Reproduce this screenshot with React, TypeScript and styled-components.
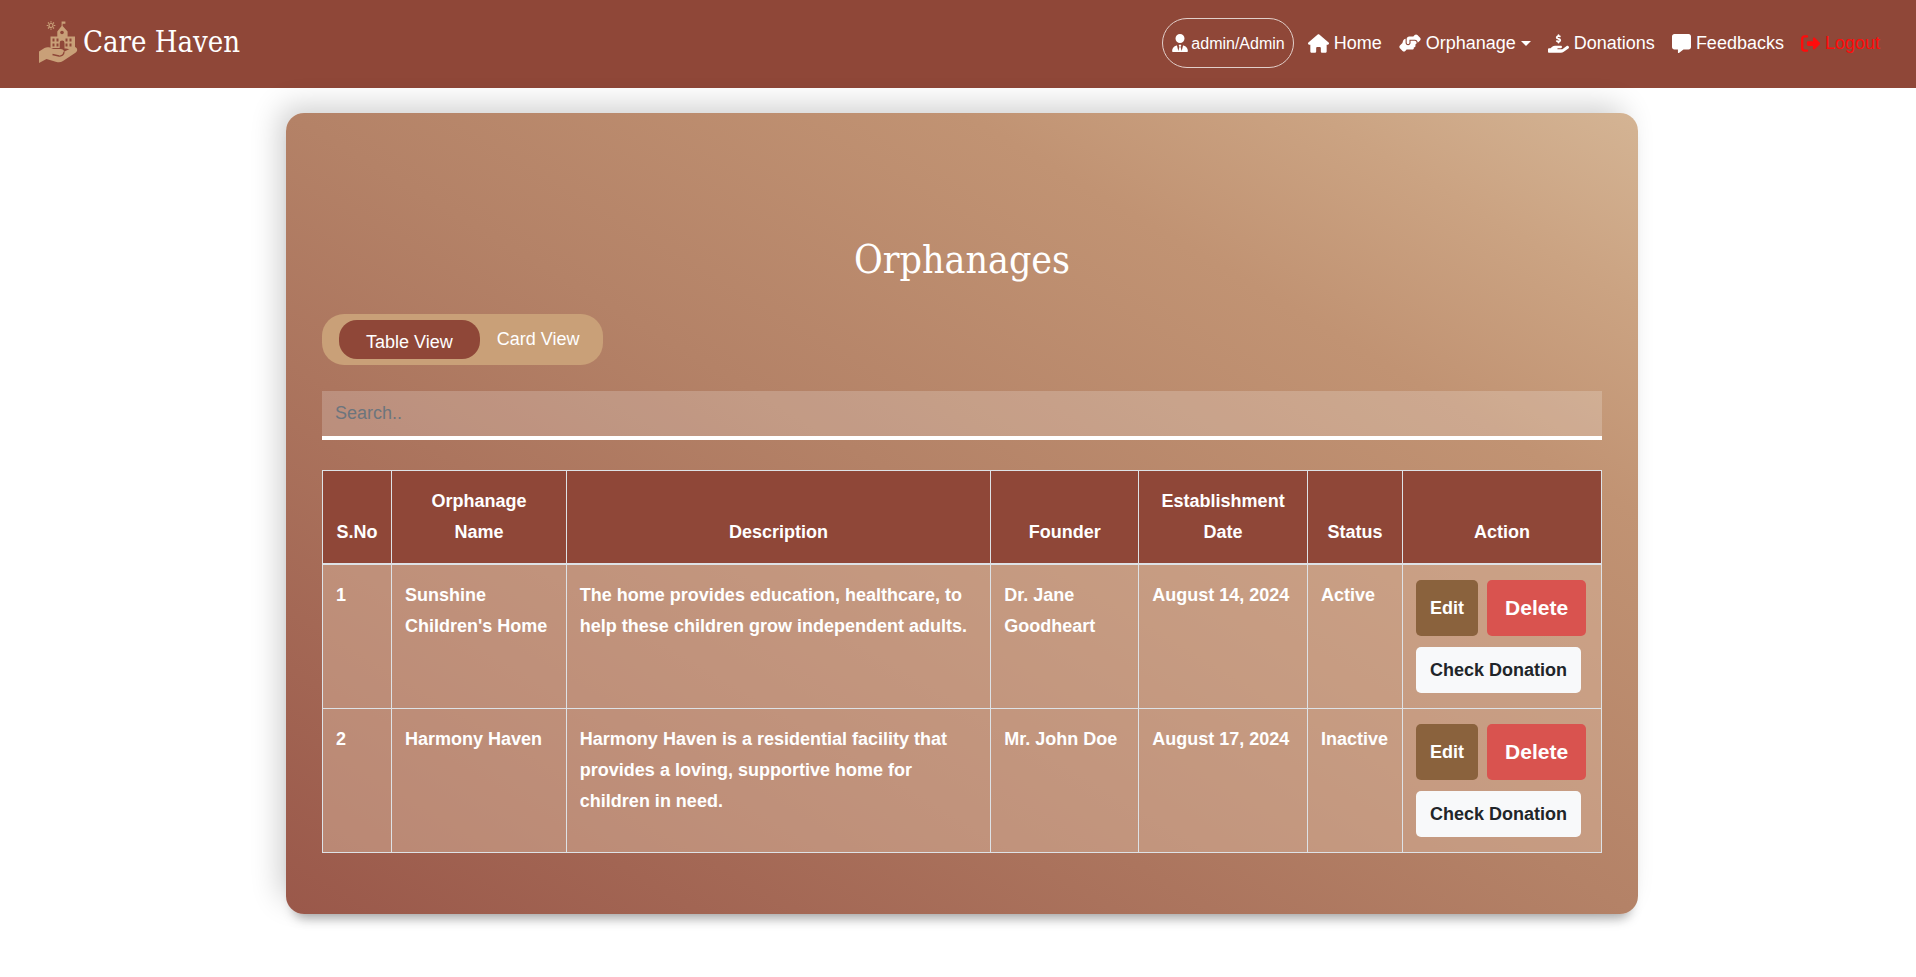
import React, { useState } from "react";
import styled, { createGlobalStyle } from "styled-components";
import {
  FaUserTie,
  FaHouse,
  FaHandshakeAngle,
  FaHandHoldingDollar,
  FaMessage,
  FaRightFromBracket,
} from "react-icons/fa6";

const GlobalStyle = createGlobalStyle`
  *, *::before, *::after { box-sizing: border-box; }
  body {
    margin: 0;
    background: #fff;
    color: #fff;
    font-family: "Liberation Sans", Arial, sans-serif;
    font-size: 18px;
    line-height: 31px;
  }
`;

const serif = `"DejaVu Serif Condensed", "DejaVu Serif", "Liberation Serif", serif`;

const Header = styled.header`
  display: flex;
  align-items: center;
  justify-content: space-between;
  min-height: 88px;
  padding: 0 36px 2px 39px;
  background: #8f4738;
`;

const Brand = styled.a`
  display: flex;
  align-items: center;
  gap: 4px;
  padding-bottom: 2px;
  color: #fff;
  font-family: ${serif};
  font-size: 29px;
  line-height: 42px;
  text-decoration: none;
`;

const Nav = styled.nav`
  display: flex;
  align-items: center;
  gap: 17px;
`;

const NavLink = styled.a<{ $danger?: boolean }>`
  display: flex;
  align-items: center;
  gap: 5px;
  color: ${(p) => (p.$danger ? "#ff0b0b" : "#fff")};
  text-decoration: none;
  white-space: nowrap;
`;

const UserPill = styled.a`
  display: flex;
  align-items: center;
  gap: 2px;
  height: 50px;
  margin-right: -3px;
  padding: 0 8px;
  border: 1px solid #e2cfca;
  border-radius: 25px;
  color: #fff;
  font-size: 16px;
  text-decoration: none;
`;

const Caret = styled.span`
  border: 5px solid transparent;
  border-top: 5px solid #fff;
  border-bottom: 0;
`;

const Main = styled.main`
  padding: 25px 20px 62px 28px;
`;

const Card = styled.section`
  max-width: 1352px;
  margin: 0 auto;
  padding: 118px 36px 61px;
  border-radius: 18px;
  background: linear-gradient(
    to top right,
    #9a584a 0%,
    #b48267 50%,
    #c19373 75%,
    #cba382 88%,
    #d4b494 100%
  );
  box-shadow:
    0 12px 12px -8px rgba(0, 0, 0, 0.35),
    -10px -10px 30px -4px rgba(0, 0, 0, 0.2);
`;

const Title = styled.h1`
  margin: 0 0 26px;
  font-family: ${serif};
  font-size: 39px;
  font-weight: 400;
  line-height: 57px;
  text-align: center;
`;

const Toggle = styled.div`
  display: inline-flex;
  align-items: center;
  gap: 17px;
  height: 51px;
  padding: 0 24px 0 17px;
  border-radius: 22px;
  background: #c9a078;
`;

const ToggleButton = styled.button<{ $active: boolean }>`
  height: 39px;
  padding: ${(p) => (p.$active ? "5px 27px 0" : "0")};
  border: 0;
  border-radius: 18px;
  background: ${(p) => (p.$active ? "#8f4738" : "transparent")};
  color: #fff;
  font: inherit;
  cursor: pointer;
`;

const Search = styled.input`
  display: block;
  width: 100%;
  height: 49px;
  margin: 26px 0 30px;
  padding: 0 13px;
  border: 0;
  border-bottom: 4px solid #fff;
  border-radius: 0;
  background: rgba(255, 255, 255, 0.2);
  color: #fff;
  font: inherit;
  outline: 0;
  &::placeholder { color: #6c757d; opacity: 1; }
`;

const Table = styled.table`
  width: 100%;
  border-collapse: collapse;
  font-weight: 700;
  background: rgba(215, 180, 155, 0.5);
`;

const Th = styled.th<{ $width: string }>`
  width: ${(p) => p.$width};
  padding: 15px 13px;
  border: 1px solid #dee2e6;
  border-bottom-width: 2px;
  background: #8f4738;
  vertical-align: bottom;
`;

const Td = styled.td`
  padding: 15px 13px;
  border: 1px solid #dee2e6;
  vertical-align: top;
`;

const Actions = styled.div`
  display: flex;
  flex-wrap: wrap;
  gap: 11px 9px;
`;

const kinds = {
  edit: "height: 56px; padding: 0 14px; background: #8a623d; color: #fff; font-size: 18px;",
  remove: "height: 56px; padding: 0 18px; background: #d9534f; color: #fff; font-size: 21px;",
  check: "height: 46px; padding: 0 14px; background: #f8f9fa; color: #212529; font-size: 18px;",
};

const ActionButton = styled.button<{ $kind: keyof typeof kinds }>`
  border: 0;
  border-radius: 5px;
  font-family: inherit;
  font-weight: 700;
  cursor: pointer;
  ${(p) => kinds[p.$kind]}
`;

const Logo = () => (
  <svg width="40" height="42" viewBox="0 0 40 42" fill="#c9a078" aria-hidden="true">
    <g stroke="#c9a078" strokeWidth="1.200" fill="none">
      <circle cx="12" cy="4.500" r="2" />
      <path d="M12 .2v1.400M12 7.400v1.400M7.700 4.500h1.400M14.900 4.500h1.400M9 1.500l1 1M14 6.500l1 1M15 1.500l-1 1M10 6.500l-1 1" />
    </g>
    <path d="M22.600 5V.5h3.800v2.300h-2.800V5l5 5.500v5H36v11l-4 2-5-1h-1.500v-5.500a2.400 2.400 0 0 0-4.800 0V27H11.500V15.500h6.800v-5z" />
    <g fill="#8f4738">
      <circle cx="23" cy="11.500" r="1.800" />
      <path d="M13.500 17.500h2v3h-2zm4 0h2v3h-2zM26.500 17.500h2v3h-2zm4 0h2v3h-2zM13.500 22.500h2v3h-2zm4 0h2v3h-2zM26.500 22.500h2v3h-2zm4 0h2v3h-2z" />
    </g>
    <path d="M0 30.500 5.500 27c2-1 4-.8 6-.3l3 1.300h7c2 0 3.500 1 3.500 2.800l8.500-4.300c3-1.300 5.500 1 4.500 3.500-.4.900-1.300 1.500-2.300 2.200L24 40c-2 1.300-4 1.600-6.500 1L7.500 38 0 42z" />
    <path d="M13.500 33.500 20 35c3 .5 5-1.500 5-4.200" fill="none" stroke="#8f4738" strokeWidth="1.300" />
  </svg>
);

const columns = [
  ["S.No", "69px"],
  ["Orphanage Name", "175px"],
  ["Description", "425px"],
  ["Founder", "148px"],
  ["Establishment Date", "169px"],
  ["Status", "95px"],
  ["Action", "199px"],
];

const orphanages = [
  {
    name: "Sunshine Children's Home",
    description: "The home provides education, healthcare, to help these children grow independent adults.",
    founder: "Dr. Jane Goodheart",
    date: "August 14, 2024",
    status: "Active",
  },
  {
    name: "Harmony Haven",
    description: "Harmony Haven is a residential facility that provides a loving, supportive home for children in need.",
    founder: "Mr. John Doe",
    date: "August 17, 2024",
    status: "Inactive",
  },
];

export default function App() {
  const [view, setView] = useState("Table View");
  return (
    <>
      <GlobalStyle />
      <Header>
        <Brand href="#"><Logo />Care Haven</Brand>
        <Nav>
          <UserPill href="#"><FaUserTie size={18} />admin/Admin</UserPill>
          <NavLink href="#"><FaHouse size={21} />Home</NavLink>
          <NavLink href="#"><FaHandshakeAngle size={22} />Orphanage<Caret /></NavLink>
          <NavLink href="#"><FaHandHoldingDollar size={21} />Donations</NavLink>
          <NavLink href="#"><FaMessage size={19} />Feedbacks</NavLink>
          <NavLink href="#" $danger><FaRightFromBracket size={19} />Logout</NavLink>
        </Nav>
      </Header>
      <Main>
        <Card>
          <Title>Orphanages</Title>
          <Toggle>
            {["Table View", "Card View"].map((v) => (
              <ToggleButton key={v} type="button" $active={v === view} onClick={() => setView(v)}>
                {v}
              </ToggleButton>
            ))}
          </Toggle>
          <Search type="search" placeholder="Search.." aria-label="Search orphanages" />
          <Table>
            <thead>
              <tr>
                {columns.map(([label, width]) => (
                  <Th key={label} $width={width} scope="col">{label}</Th>
                ))}
              </tr>
            </thead>
            <tbody>
              {orphanages.map((o, i) => (
                <tr key={o.name}>
                  <Td>{i + 1}</Td>
                  <Td>{o.name}</Td>
                  <Td>{o.description}</Td>
                  <Td>{o.founder}</Td>
                  <Td>{o.date}</Td>
                  <Td>{o.status}</Td>
                  <Td>
                    <Actions>
                      <ActionButton type="button" $kind="edit">Edit</ActionButton>
                      <ActionButton type="button" $kind="remove">Delete</ActionButton>
                      <ActionButton type="button" $kind="check">Check Donation</ActionButton>
                    </Actions>
                  </Td>
                </tr>
              ))}
            </tbody>
          </Table>
        </Card>
      </Main>
    </>
  );
}
